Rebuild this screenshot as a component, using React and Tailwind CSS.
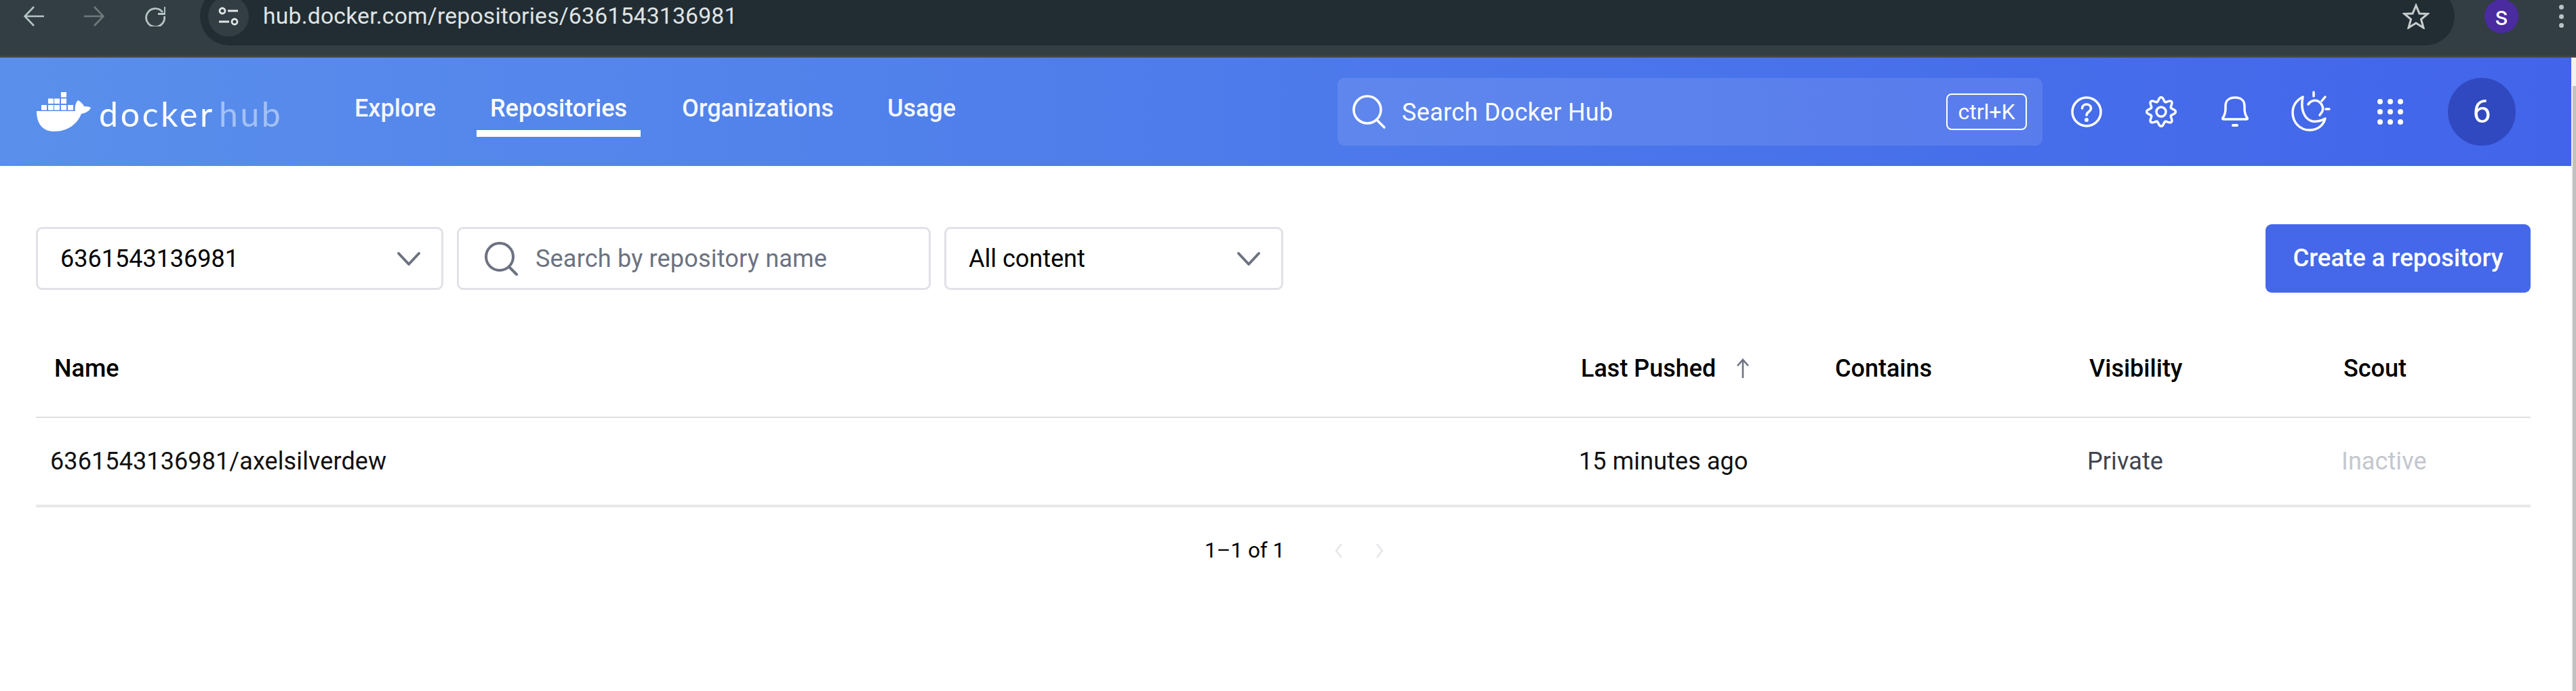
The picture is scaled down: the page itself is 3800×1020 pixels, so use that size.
import React from 'react';

const ROBOTO = 'font-[Roboto,sans-serif]';

// 8-lobed gear outline used in the top bar
function gearPath() {
  const points = [];
  for (let i = 0; i < 96; i++) {
    const angle = (i / 96) * Math.PI * 2 + Math.PI / 2;
    const radius = 18.5 + 3 * Math.cos(8 * (angle - Math.PI / 2));
    points.push(`${(23 + radius * Math.cos(angle)).toFixed(2)} ${(23 + radius * Math.sin(angle)).toFixed(2)}`);
  }
  return `M${points.join('L')}Z`;
}

function SearchIcon({ className, strokeWidth = 4.5 }) {
  return (
    <svg viewBox="0 0 50 50" fill="none" stroke="currentColor" strokeWidth={strokeWidth} strokeLinecap="round" className={className}>
      <circle cx="22" cy="22" r="20" />
      <path d="M36 37 L47 48" />
    </svg>
  );
}

function Chevron({ className }) {
  return (
    <svg viewBox="0 0 36 22" fill="none" stroke="currentColor" strokeWidth="4" strokeLinecap="round" strokeLinejoin="round" className={className}>
      <path d="M3 3 L18 19 L33 3" />
    </svg>
  );
}

function BrowserBar() {
  return (
    <div className="h-[85px] shrink-0 overflow-hidden bg-[#323e44] border-b-[3px] border-[#444749]">
      <div className="h-[48px] flex items-center">
        <svg viewBox="0 0 30 30" fill="none" stroke="#b5c4c6" strokeWidth="2.6" className="ml-[35px] w-[30px] h-[30px]">
          <path d="M15 1 L1.5 15 L15 29 M2 15 H30" />
        </svg>
        <svg viewBox="0 0 30 30" fill="none" stroke="#6d7a7d" strokeWidth="2.6" className="ml-[59px] w-[30px] h-[30px]">
          <path d="M15 1 L28.5 15 L15 29 M28 15 H0" />
        </svg>
        <svg viewBox="0 0 30 30" fill="none" stroke="#b5c4c6" strokeWidth="2.8" className="ml-[60px] w-[30px] h-[30px]">
          <path d="M26 9 A13.5 13.5 0 1 0 28.5 15" />
          <path d="M29.5 1 V11.5 H19" />
        </svg>
        <div className="ml-[51px] h-[86px] w-[3326px] shrink-0 rounded-[43px] bg-[#222d33] flex items-center">
          <div className="ml-[12px] w-[60px] h-[60px] rounded-full bg-[#323e44] flex items-center justify-center">
            <svg viewBox="0 0 32 28" fill="none" stroke="#e0e5e6" strokeWidth="2.8" className="w-[32px] h-[28px]">
              <circle cx="7" cy="6" r="4" />
              <path d="M15 6 H30 M2 22 H17" />
              <circle cx="25" cy="22" r="4" />
            </svg>
          </div>
          <span className={`ml-[21px] ${ROBOTO} text-[33.7px] tracking-[0.2px] text-[#dfe4e5]`}>hub.docker.com/repositories/6361543136981</span>
          <svg viewBox="0 0 40 38" fill="none" stroke="#c7cdce" strokeWidth="3" strokeLinejoin="miter" className="ml-auto mr-[37px] w-[40px] h-[38px]">
            <path d="M20 3 L25 15 L37 15.5 L27.5 23.5 L31 36 L20 29 L9 36 L12.5 23.5 L3 15.5 L15 15 Z" />
          </svg>
        </div>
        <div className={`ml-[44px] w-[50px] h-[50px] shrink-0 rounded-full bg-[#4a2ba0] flex items-center justify-center ${ROBOTO} text-[38px] text-white`}>s</div>
        <div className="ml-[60px] flex flex-col gap-[6.5px]">
          <span className="w-[7px] h-[7px] rounded-full bg-[#b5c4c6]" />
          <span className="w-[7px] h-[7px] rounded-full bg-[#b5c4c6]" />
          <span className="w-[7px] h-[7px] rounded-full bg-[#b5c4c6]" />
        </div>
      </div>
    </div>
  );
}

function DockerLogo() {
  const bottomRow = [7, 17, 26, 36, 46];
  const middleRow = [17, 26, 36];
  return (
    <div className="flex items-center w-[450px]">
      <svg viewBox="0 0 80 58" fill="#ffffff" className="w-[80px] h-[58px] shrink-0">
        <path d="M0 28 H57 C56 23 57 16 61 12 C65 14 69 18 70 21 C73 21 77 21 80 23 C78 28 72 31 66 32 C60 47 46 58 26 58 C10 58 0 48 0 28 Z" />
        {bottomRow.map((x) => <rect key={x} x={x} y="19" width="8" height="7.5" />)}
        {middleRow.map((x) => <rect key={x} x={x} y="9.5" width="8" height="7.5" />)}
        <rect x="36" y="0" width="8" height="7.5" />
      </svg>
      <span className="ml-[12px] mt-[5px] font-[Lato,sans-serif] text-[50px] leading-none tracking-[3.7px] text-white">docker</span>
      <span className="ml-[6px] mt-[5px] font-[Lato,sans-serif] text-[50px] leading-none tracking-[3.5px] text-[#a4c1f5]">hub</span>
    </div>
  );
}

function NavLink({ label, active, className }) {
  return (
    <div className={`relative flex items-center h-[160px] ${className}`}>
      <span className={`${ROBOTO} font-medium text-[36px] -mt-[10px] ${active ? 'text-white' : 'text-white/95'}`}>{label}</span>
      {active && <span className="absolute left-[-20px] right-[-20px] top-[107px] h-[10px] bg-white" />}
    </div>
  );
}

function TopBarIcons() {
  return (
    <div className="flex items-center text-white">
      <svg viewBox="0 0 46 46" fill="none" stroke="currentColor" strokeWidth="3.5" strokeLinecap="round" className="ml-[42px] w-[46px] h-[46px]">
        <circle cx="23" cy="23" r="21" />
        <path d="M16.5 18 C16.5 10 29.5 10 29.5 18 C29.5 23 23 23 23 28" />
        <circle cx="23" cy="35" r="1.2" fill="currentColor" />
      </svg>
      <svg viewBox="0 0 46 46" fill="none" stroke="currentColor" strokeWidth="3.5" strokeLinejoin="round" className="ml-[64px] w-[46px] h-[46px]">
        <path d={gearPath()} />
        <circle cx="23" cy="23" r="7" />
      </svg>
      <svg viewBox="0 0 46 48" fill="none" stroke="currentColor" strokeWidth="3.5" strokeLinecap="round" strokeLinejoin="round" className="ml-[63px] w-[46px] h-[48px]">
        <path d="M5 33 C8 29 9 24 9 19 V15 C9 7 15 3 23 3 C31 3 37 7 37 15 V19 C37 24 38 29 41 33 Q42 35 40 35 H6 Q4 35 5 33 Z" />
        <path d="M20 44 H26" strokeWidth="4" />
      </svg>
      <svg viewBox="0 0 65 65" fill="none" stroke="currentColor" strokeWidth="3.5" strokeLinecap="round" strokeLinejoin="round" className="ml-[58px] w-[65px] h-[65px]">
        <path d="M19 10 C8 16 4 25 4 33 C4 48 15 59 29 59 C40 59 49 53 52 42 C45 46 39 47 33 46 C22 43 15 30 19 10 Z" />
        <path d="M27 21 C30 16 36 14 41 16 C47 19 50 26 48 31 C47 33 45 35 44 37" />
        <path d="M35 3 V9 M52 10 L47 16 M53 28 H58" />
      </svg>
      <div className="ml-[64px] grid grid-cols-3 gap-x-[7px] gap-y-[7px]">
        {[0, 1, 2, 3, 4, 5, 6, 7, 8].map((dot) => <span key={dot} className="w-[8px] h-[8px] rounded-full bg-white" />)}
      </div>
      <div className={`ml-[66px] w-[100px] h-[100px] rounded-full bg-[#3049c0] flex items-center justify-center ${ROBOTO} text-[49px] text-white`}>6</div>
    </div>
  );
}

function Header() {
  return (
    <div className="h-[160px] shrink-0 flex items-center pl-[54px] bg-linear-to-r from-[#5a8feb] to-[#4264ea]">
      <DockerLogo />
      <NavLink label="Explore" className="ml-[19px]" />
      <NavLink label="Repositories" active className="ml-[80px]" />
      <NavLink label="Organizations" className="ml-[81px]" />
      <NavLink label="Usage" className="ml-[79px]" />
      <div className="ml-[563px] w-[1040px] h-[100px] rounded-[10px] bg-white/10 flex items-center text-white">
        <SearchIcon className="ml-[22px] w-[50px] h-[50px]" strokeWidth="3.6" />
        <span className={`ml-[23px] mt-[2px] ${ROBOTO} text-[36px] tracking-[0.3px]`}>Search Docker Hub</span>
        <span className={`ml-auto mr-[23px] h-[54px] w-[119px] rounded-[8px] border-2 border-white flex items-center justify-center ${ROBOTO} text-[32px]`}>ctrl+K</span>
      </div>
      <TopBarIcons />
    </div>
  );
}

function SelectBox({ label, className }) {
  return (
    <div className={`h-[93px] rounded-[9px] border-[3px] border-[#e1e2e7] flex items-center justify-between pl-[33px] pr-[30px] ${className}`}>
      <span className={`${ROBOTO} text-[36px] text-black`}>{label}</span>
      <Chevron className="w-[36px] h-[22px] text-[#6c7280]" />
    </div>
  );
}

function Filters() {
  return (
    <div className="flex items-center justify-between">
      <div className="flex gap-[20px]">
        <SelectBox label="6361543136981" className="w-[601px]" />
        <div className="w-[699px] h-[93px] rounded-[9px] border-[3px] border-[#e1e2e7] flex items-center">
          <SearchIcon className="ml-[38px] w-[50px] h-[50px] text-[#6c7280]" strokeWidth="4" />
          <span className={`ml-[25px] ${ROBOTO} text-[36px] tracking-[0.2px] text-[#6c7280]`}>Search by repository name</span>
        </div>
        <SelectBox label="All content" className="w-[500px]" />
      </div>
      <div className={`w-[391px] h-[101px] rounded-[9px] bg-[#4568eb] flex items-center justify-center ${ROBOTO} font-medium text-[36.5px] text-white`}>Create a repository</div>
    </div>
  );
}

function RepositoryTable() {
  const gridCols = 'grid grid-cols-[2255px_375px_375px_375px_1fr] items-center';
  const headCell = `pl-[24px] -mt-[1px] ${ROBOTO} font-medium text-[36px] text-black`;
  const rowCell = `pl-[21px] ${ROBOTO} text-[36px] tracking-[0.1px]`;
  return (
    <div className="mt-[42px]">
      <div className={`${gridCols} h-[143px] border-b-[2px] border-[#dfe0e3]`}>
        <span className={`${headCell} pl-[27px]`}>Name</span>
        <span className={`${headCell} flex items-center`}>
          Last Pushed
          <svg viewBox="0 0 20 30" fill="none" stroke="#6c7280" strokeWidth="2.6" className="ml-[30px] w-[20px] h-[30px]">
            <path d="M10 29 V2 M2 11 L10 2 L18 11" />
          </svg>
        </span>
        <span className={headCell}>Contains</span>
        <span className={headCell}>Visibility</span>
        <span className={headCell}>Scout</span>
      </div>
      <div className={`${gridCols} h-[132px] border-b-[4px] border-[#e8e8ea]`}>
        <span className={`${rowCell} text-[#111111]`}>6361543136981/axelsilverdew</span>
        <span className={`${rowCell} text-[#111111]`}>15 minutes ago</span>
        <span />
        <span className={`${rowCell} pl-[20px] text-[#40454f]`}>Private</span>
        <span className={`${rowCell} text-[#c4c7ce]`}>Inactive</span>
      </div>
      <div className="h-[128px] flex items-center pl-[1724px]">
        <span className={`${ROBOTO} text-[31.5px] text-black`}>1–1 of 1</span>
        <svg viewBox="0 0 12 24" fill="none" stroke="#e5e6e9" strokeWidth="2.5" className="ml-[74px] w-[12px] h-[24px]">
          <path d="M10 2 L2 12 L10 22" />
        </svg>
        <svg viewBox="0 0 12 24" fill="none" stroke="#e5e6e9" strokeWidth="2.5" className="ml-[48px] w-[12px] h-[24px]">
          <path d="M2 2 L10 12 L2 22" />
        </svg>
      </div>
    </div>
  );
}

export default function App() {
  return (
    <div className="w-[3800px] h-[1020px] overflow-hidden flex flex-col bg-white">
      <BrowserBar />
      <div className="flex-1 flex min-h-0">
        <div className="flex-1 min-w-0 flex flex-col">
          <Header />
          <div className="pt-[86px] pl-[53px] pr-[60px]">
            <Filters />
            <RepositoryTable />
          </div>
        </div>
        {/* page scrollbar */}
        <div className="w-[7px] shrink-0 bg-[#f1f1f1] pt-[42px] pl-[2px]">
          <div className="h-full bg-[#c1c1c1]" />
        </div>
      </div>
    </div>
  );
}
